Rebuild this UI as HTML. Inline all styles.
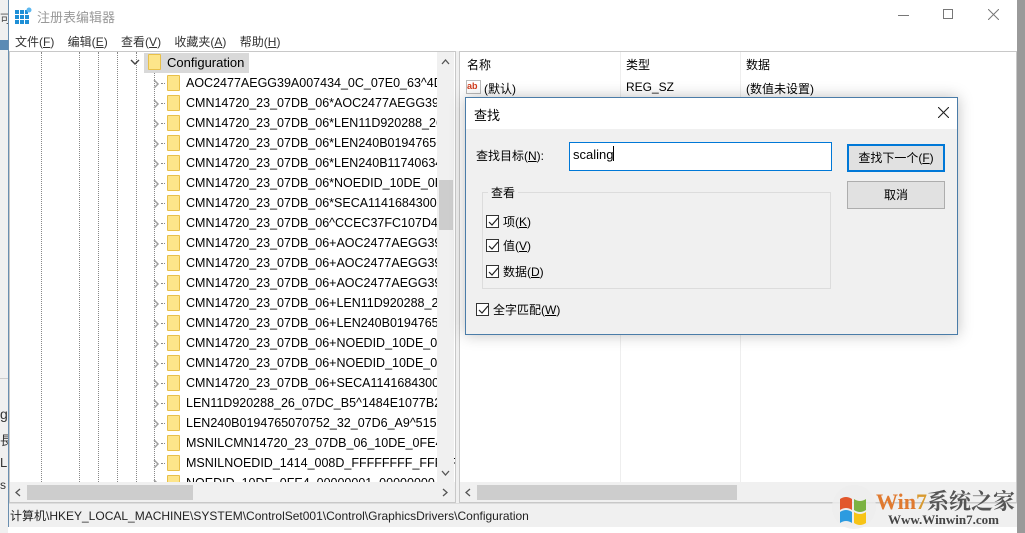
<!DOCTYPE html>
<html><head><meta charset="utf-8"><style>
*{margin:0;padding:0;box-sizing:border-box}
body{width:1025px;height:533px;overflow:hidden;background:#f0f0f0;font-family:"Liberation Sans","Noto Sans CJK SC",sans-serif;font-size:12px;color:#000;position:relative}
.abs{position:absolute}
.row{position:absolute;left:0;height:20px;line-height:20px;white-space:nowrap}
.fold{position:absolute;width:13px;height:16px;background:#fde58a;border:1px solid #e8c04a;border-radius:1px}
.chev{position:absolute}
.dot{position:absolute;border-left:1px dotted #888}
.cb{position:absolute;width:13px;height:13px;border:1px solid #333;background:#fff}
.cb svg{position:absolute;left:1px;top:1px}
</style></head><body>
<div class="abs" style="left:0;top:0;width:8px;height:533px;background:#f0f0f0"></div>
<div class="abs" style="left:0;top:40px;width:8px;height:10px;background:#5b8bb5"></div>
<div class="abs" style="left:0;top:10px;font-size:12px;color:#555">可</div>
<div class="abs" style="left:0;top:378px;width:8px;height:1px;background:#ccc"></div>
<div class="abs" style="left:0;top:406px;font-size:14px;color:#333">g</div>
<div class="abs" style="left:0;top:430px;font-size:13px;color:#333">長</div>
<div class="abs" style="left:0;top:455px;font-size:13px;color:#333">L</div>
<div class="abs" style="left:0;top:478px;font-size:12px;color:#333">s</div>
<div class="abs" style="left:1017px;top:0;width:8px;height:533px;background:#9a9a9a"></div>

<div class="abs" style="left:8px;top:0;width:1009px;height:533px;background:#f0f0f0;border-left:1px solid #6a8fb0"></div>
<div class="abs" style="left:9px;top:0;width:1008px;height:32px;background:#fff"></div>
<svg class="abs" style="left:15px;top:7px" width="17" height="17" viewBox="0 0 17 17"><g fill="#1e8fd6"><rect x="0" y="3" width="4" height="4"/><rect x="5" y="3" width="4" height="4"/><rect x="10" y="3" width="3" height="4"/><rect x="0" y="8" width="4" height="4"/><rect x="5" y="8" width="4" height="4"/><rect x="10" y="8" width="4" height="4"/><rect x="0" y="13" width="4" height="4"/><rect x="5" y="13" width="4" height="4"/><rect x="10" y="13" width="4" height="4"/></g><circle cx="14" cy="3" r="2.5" fill="#5cb8f0"/></svg>
<div class="abs" style="left:37px;top:7px;font-size:13px;color:#999">注册表编辑器</div>
<div class="abs" style="left:898px;top:15px;width:11px;height:1px;background:#777"></div>
<div class="abs" style="left:943px;top:9px;width:10px;height:10px;border:1px solid #777"></div>
<svg class="abs" style="left:988px;top:9px" width="11" height="11"><path d="M0 0L11 11M11 0L0 11" stroke="#777"/></svg>
<div class="abs" style="left:9px;top:32px;width:1008px;height:19px;background:#fff"></div>
<div class="abs" style="left:15px;top:33px;font-size:12px;color:#333;white-space:nowrap">文件(<u>F</u>)&nbsp;&nbsp;&nbsp;&nbsp;编辑(<u>E</u>)&nbsp;&nbsp;&nbsp;&nbsp;查看(<u>V</u>)&nbsp;&nbsp;&nbsp;&nbsp;收藏夹(<u>A</u>)&nbsp;&nbsp;&nbsp;&nbsp;帮助(<u>H</u>)</div>

<div class="abs" style="left:9px;top:51px;width:447px;height:452px;background:#fff;border:1px solid #c8c8c8;overflow:hidden">
 <div class="dot" style="left:31px;top:0;height:430px"></div>
 <div class="dot" style="left:69px;top:0;height:430px"></div>
 <div class="dot" style="left:88px;top:0;height:430px"></div>
 <div class="dot" style="left:107px;top:0;height:430px"></div>
 <div class="dot" style="left:126px;top:0;height:430px"></div>
 <div class="dot" style="left:144px;top:20px;height:410px"></div>
 <div class="abs" style="left:134px;top:1px;width:105px;height:20px;background:#d9d9d9"></div>
 <svg class="chev" style="left:120px;top:7px" width="10" height="7"><path d="M1 1L5 5L9 1" stroke="#444" stroke-width="1.4" fill="none"/></svg>
 <div class="fold" style="left:138px;top:2px"></div>
 <div class="row" style="left:157px;top:1px;font-size:13px">Configuration</div>
 <div id="rows"></div>
 <div class="abs" style="left:427px;top:0;width:17px;height:430px;background:#f0f0f0"></div>
 <svg class="abs" style="left:431px;top:7px" width="9" height="6"><path d="M1 5L4.5 1L8 5" stroke="#555" stroke-width="1.3" fill="none"/></svg>
 <svg class="abs" style="left:431px;top:418px" width="9" height="6"><path d="M1 1L4.5 5L8 1" stroke="#555" stroke-width="1.3" fill="none"/></svg>
 <div class="abs" style="left:429px;top:128px;width:14px;height:50px;background:#cdcdcd"></div>
 <div class="abs" style="left:0;top:430px;width:445px;height:20px;background:#f0f0f0"></div>
 <svg class="abs" style="left:5px;top:436px" width="6" height="9"><path d="M5 1L1 4.5L5 8" stroke="#555" stroke-width="1.3" fill="none"/></svg>
 <svg class="abs" style="left:432px;top:436px" width="6" height="9"><path d="M1 1L5 4.5L1 8" stroke="#555" stroke-width="1.3" fill="none"/></svg>
 <div class="abs" style="left:17px;top:433px;width:166px;height:15px;background:#cdcdcd"></div>
</div>

<div class="abs" style="left:459px;top:51px;width:558px;height:452px;background:#fff;border:1px solid #c8c8c8;overflow:hidden">
 <div class="abs" style="left:160px;top:0;width:1px;height:430px;background:#eee"></div>
 <div class="abs" style="left:280px;top:0;width:1px;height:430px;background:#eee"></div>
 <div class="abs" style="left:7px;top:4px">名称</div>
 <div class="abs" style="left:166px;top:4px">类型</div>
 <div class="abs" style="left:286px;top:4px">数据</div>
 <div class="abs" style="left:6px;top:28px;width:15px;height:14px;border:1px solid #bbb;font-size:9px;font-weight:bold;color:#d23b1b;line-height:10px">ab</div>
 <div class="abs" style="left:24px;top:28px">(默认)</div>
 <div class="abs" style="left:166px;top:28px">REG_SZ</div>
 <div class="abs" style="left:286px;top:28px">(数值未设置)</div>
 <div class="abs" style="left:0;top:430px;width:556px;height:20px;background:#f0f0f0"></div>
 <svg class="abs" style="left:5px;top:436px" width="6" height="9"><path d="M5 1L1 4.5L5 8" stroke="#555" stroke-width="1.3" fill="none"/></svg>
 <div class="abs" style="left:17px;top:433px;width:260px;height:15px;background:#cdcdcd"></div>
</div>

<div class="abs" style="left:9px;top:503px;width:1008px;height:24px;background:#f0f0f0;border-top:1px solid #ddd"></div>
<div class="abs" style="left:10px;top:507px;font-size:12px;color:#222;white-space:nowrap">计算机\HKEY_LOCAL_MACHINE\SYSTEM\ControlSet001\Control\GraphicsDrivers\Configuration</div>
<div class="abs" style="left:8px;top:527px;width:1009px;height:6px;background:#fff"></div>

<div class="abs" style="left:465px;top:97px;width:493px;height:238px;background:#f0f0f0;border:1px solid #4a7ca8;box-shadow:0 0 14px rgba(0,0,0,0.25)">
 <div class="abs" style="left:0;top:0;width:491px;height:31px;background:#fff"></div>
 <div class="abs" style="left:8px;top:7px;font-size:13px">查找</div>
 <svg class="abs" style="left:472px;top:9px" width="11" height="11"><path d="M0 0L11 11M11 0L0 11" stroke="#222" stroke-width="1.1"/></svg>
 <div class="abs" style="left:10px;top:49px">查找目标(<u>N</u>):</div>
 <div class="abs" style="left:103px;top:44px;width:263px;height:29px;background:#fff;border:1px solid #0078d7"></div>
 <div class="abs" style="left:107px;top:48px;font-size:13px">scaling<span style="display:inline-block;width:1px;height:15px;background:#000;vertical-align:-2px"></span></div>
 <div class="abs" style="left:381px;top:46px;width:98px;height:28px;border:2px solid #0078d7;background:#e1e1e1;text-align:center;line-height:24px">查找下一个(<u>F</u>)</div>
 <div class="abs" style="left:381px;top:83px;width:98px;height:28px;border:1px solid #adadad;background:#e1e1e1;text-align:center;line-height:26px">取消</div>
 <div class="abs" style="left:16px;top:94px;width:349px;height:97px;border:1px solid #dcdcdc"></div>
 <div class="abs" style="left:22px;top:86px;background:#f0f0f0;padding:0 3px">查看</div>
 <div class="cb" style="left:20px;top:117px"><svg width="10" height="10"><path d="M1 5L4 8L10 1" stroke="#222" fill="none" stroke-width="1.2"/></svg></div>
 <div class="abs" style="left:37px;top:115px">项(<u>K</u>)</div>
 <div class="cb" style="left:20px;top:141px"><svg width="10" height="10"><path d="M1 5L4 8L10 1" stroke="#222" fill="none" stroke-width="1.2"/></svg></div>
 <div class="abs" style="left:37px;top:139px">值(<u>V</u>)</div>
 <div class="cb" style="left:20px;top:167px"><svg width="10" height="10"><path d="M1 5L4 8L10 1" stroke="#222" fill="none" stroke-width="1.2"/></svg></div>
 <div class="abs" style="left:37px;top:165px">数据(<u>D</u>)</div>
 <div class="cb" style="left:10px;top:205px"><svg width="10" height="10"><path d="M1 5L4 8L10 1" stroke="#222" fill="none" stroke-width="1.2"/></svg></div>
 <div class="abs" style="left:27px;top:203px">全字匹配(<u>W</u>)</div>
</div>

<svg class="abs" style="left:830px;top:483px" width="48" height="48"><circle cx="24" cy="24" r="22" fill="#eee" opacity="0.8"/><path d="M10 16q6-4 12 0v11q-6-4-12 0z" fill="#e2572c"/><path d="M24 16q6 4 12 0v11q-6 4-12 0z" fill="#7cb342"/><path d="M10 29q6-4 12 0v11q-6-4-12 0z" fill="#2c9be0"/><path d="M24 29q6 4 12 0v11q-6 4-12 0z" fill="#f7c417"/></svg>
<div class="abs" style="left:876px;top:485px;font-family:'Liberation Serif',serif;font-weight:bold;font-size:22px;color:#e07a30;white-space:nowrap">Win<span style="color:#d89a30">7</span><span style="color:#555;font-family:'Noto Serif CJK SC',serif">系统之家</span></div>
<div class="abs" style="left:888px;top:512px;font-family:'Liberation Serif',serif;font-weight:bold;font-size:13px;color:#444;white-space:nowrap">Www.Winwin7.com</div>

<script>
var names=["AOC2477AEGG39A007434_0C_07E0_63^4D7","CMN14720_23_07DB_06*AOC2477AEGG39A","CMN14720_23_07DB_06*LEN11D920288_26","CMN14720_23_07DB_06*LEN240B0194765C","CMN14720_23_07DB_06*LEN240B11740634","CMN14720_23_07DB_06*NOEDID_10DE_0FE","CMN14720_23_07DB_06*SECA114168430090","CMN14720_23_07DB_06^CCEC37FC107D41","CMN14720_23_07DB_06+AOC2477AEGG39A","CMN14720_23_07DB_06+AOC2477AEGG39A","CMN14720_23_07DB_06+AOC2477AEGG39A","CMN14720_23_07DB_06+LEN11D920288_26","CMN14720_23_07DB_06+LEN240B0194765","CMN14720_23_07DB_06+NOEDID_10DE_0F","CMN14720_23_07DB_06+NOEDID_10DE_0F","CMN14720_23_07DB_06+SECA1141684300","LEN11D920288_26_07DC_B5^1484E1077B2","LEN240B0194765070752_32_07D6_A9^515","MSNILCMN14720_23_07DB_06_10DE_0FE4_","MSNILNOEDID_1414_008D_FFFFFFFF_FFFFFF","NOEDID_10DE_0FE4_00000001_00000000_1"];
var h="";
names.forEach(function(n,i){var t=21+i*20;
h+='<svg class="chev" style="left:143px;top:'+(t+6)+'px" width="7" height="10"><path d="M1 1L5 5L1 9" stroke="#a0a0a0" stroke-width="1.5" fill="none"/></svg><div class="dot" style="left:151px;top:'+(t+10)+'px;width:4px;height:1px;border-left:none;border-top:1px dotted #888"></div><div class="fold" style="left:157px;top:'+(t+2)+'px"></div><div class="row" style="left:176px;top:'+t+'px;font-size:12.5px">'+n+'</div>';});
document.getElementById("rows").innerHTML=h;
</script>
</body></html>
